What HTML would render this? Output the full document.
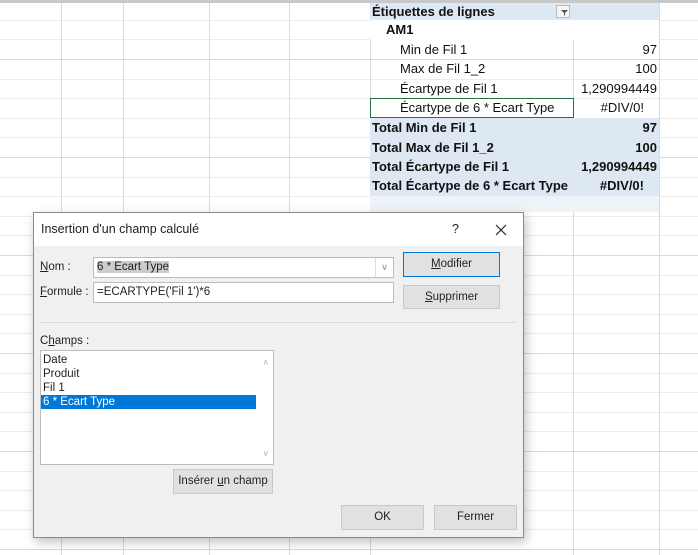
<!DOCTYPE html>
<html><head><meta charset="utf-8"><style>
*{margin:0;padding:0;box-sizing:border-box}
body{width:698px;height:555px;overflow:hidden;position:relative;background:#fff;font-family:"Liberation Sans",sans-serif}
.grid{position:absolute;left:0;top:0;width:698px;height:555px;
background-image:repeating-linear-gradient(to bottom,transparent 0,transparent 19px,#dadada 19px,#dadada 19.6px);background-position:0 1px}
.v{position:absolute;top:0;height:555px;width:1px;background:#dadada}
.topbar{position:absolute;left:0;top:0;width:698px;height:3px;background:#c8c8c8}
.pv{position:absolute;left:370px;width:289px;height:19.6px;font-size:13px;color:#111;line-height:19px}
.pv span.l{position:absolute;left:2px}
.pv span.r{position:absolute;right:2px}
.blue{background:#dde8f3}
.b{font-weight:bold}
.dlg{position:absolute;left:33px;top:212px;width:491px;height:326px;background:#f0f0f0;border:1px solid #8a8a8a;box-shadow:2px 4px 10px rgba(0,0,0,.25);font-size:11.5px;color:#222}
.title{position:absolute;left:0;top:0;width:489px;height:33px;background:#fff;font-size:12.5px;line-height:33px;padding-left:7px}
.box{position:absolute;background:#fff;border:1px solid #bcbcbc;padding-left:3px;line-height:18px}
.btn{position:absolute;background:#e1e1e1;border:1px solid #c9c9c9;text-align:center}
.lbl{position:absolute}
</style></head><body>
<div class="grid"></div>
<div class="v" style="left:61px"></div><div class="v" style="left:123px"></div><div class="v" style="left:209px"></div><div class="v" style="left:289px"></div><div class="v" style="left:370px"></div><div class="v" style="left:573px"></div><div class="v" style="left:659px"></div>
<div class="topbar"></div>
<div class="pv blue b" style="top:3px;height:17px;line-height:17px"><span class="l">Étiquettes de lignes</span><span style="position:absolute;left:186px;top:2px;width:14px;height:13px;border:1px solid #bbb;background:#f6f6f6"><svg width="12" height="11" style="position:absolute;left:1px;top:1px"><path d="M3 3h7l-3 3v3l-1-1V6z" fill="#555"/></svg></span></div>
<div class="pv b" style="top:20px;background:#fff"><span class="l" style="left:16px">AM1</span></div>
<div class="pv" style="top:40px"><span class="l" style="left:30px">Min de Fil 1</span><span class="r">97</span></div>
<div class="pv" style="top:59px"><span class="l" style="left:30px">Max de Fil 1_2</span><span class="r">100</span></div>
<div class="pv" style="top:79px"><span class="l" style="left:30px">Écartype de Fil 1</span><span class="r">1,290994449</span></div>
<div class="pv" style="top:98px"><span style="position:absolute;left:0;top:0;width:204px;height:20px;border:1px solid #217346;background:#fff"></span><span class="l" style="left:30px">Écartype de 6 * Ecart Type</span><span class="r" style="right:15px">#DIV/0!</span></div>
<div class="pv blue b" style="top:118px"><span class="l">Total Min de Fil 1</span><span class="r">97</span></div>
<div class="pv blue b" style="top:138px"><span class="l">Total Max de Fil 1_2</span><span class="r">100</span></div>
<div class="pv blue b" style="top:157px"><span class="l">Total Écartype de Fil 1</span><span class="r">1,290994449</span></div>
<div class="pv blue b" style="top:176px"><span class="l">Total Écartype de 6 * Ecart Type</span><span class="r" style="right:15px">#DIV/0!</span></div>
<div style="position:absolute;left:370px;top:196px;width:289px;height:16px;background:#eef3f8"></div>

<div class="dlg">
<div class="title">Insertion d'un champ calculé<span style="position:absolute;left:418px">?</span><svg width="12" height="12" style="position:absolute;left:461px;top:11px"><path d="M1 1L11 11M11 1L1 11" stroke="#222" stroke-width="1.2"/></svg></div>
<div class="lbl" style="left:6px;top:48px"><u>N</u>om :</div>
<div class="box" style="left:59px;top:44px;width:301px;height:21px"><span style="background:#ccc">6 * Ecart Type</span><span style="position:absolute;right:0;top:0;width:18px;height:19px;border-left:1px solid #ddd;text-align:center;color:#888;font-size:9px">∨</span></div>
<div class="lbl" style="left:6px;top:73px"><u>F</u>ormule :</div>
<div class="box" style="left:59px;top:69px;width:301px;height:21px">=ECARTYPE('Fil 1')*6</div>
<div class="btn" style="left:369px;top:39px;width:97px;height:25px;border:1px solid #0078d7;line-height:22px"><u>M</u>odifier</div>
<div class="btn" style="left:369px;top:72px;width:97px;height:24px;line-height:22px"><u>S</u>upprimer</div>
<div style="position:absolute;left:6px;top:109px;width:477px;height:1px;background:#dcdcdc"></div>
<div class="lbl" style="left:6px;top:122px">C<u>h</u>amps :</div>
<div class="box" style="left:6px;top:137px;width:234px;height:115px;padding:0;line-height:14px">
<div style="padding-left:2px;margin-top:2px">Date</div><div style="padding-left:2px">Produit</div><div style="padding-left:2px">Fil 1</div><div style="padding-left:2px;background:#0078d7;color:#fff;width:215px">6 * Ecart Type</div>
<span style="position:absolute;right:4px;top:4px;color:#bbb;font-size:9px">∧</span><span style="position:absolute;right:4px;bottom:4px;color:#bbb;font-size:9px">∨</span></div>
<div class="btn" style="left:139px;top:256px;width:100px;height:25px;line-height:23px">Insérer <u>u</u>n champ</div>
<div class="btn" style="left:307px;top:292px;width:83px;height:25px;line-height:23px">OK</div>
<div class="btn" style="left:400px;top:292px;width:83px;height:25px;line-height:23px">Fermer</div>
</div>
</body></html>
